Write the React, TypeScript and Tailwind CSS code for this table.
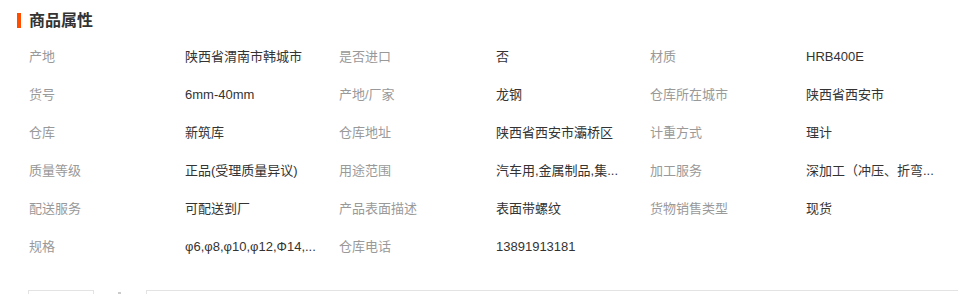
import React from "react";

const rows: [string, string, string, string, string, string][] = [
  ["产地", "陕西省渭南市韩城市", "是否进口", "否", "材质", "HRB400E"],
  ["货号", "6mm-40mm", "产地/厂家", "龙钢", "仓库所在城市", "陕西省西安市"],
  ["仓库", "新筑库", "仓库地址", "陕西省西安市灞桥区", "计重方式", "理计"],
  ["质量等级", "正品(受理质量异议)", "用途范围", "汽车用,金属制品,集...", "加工服务", "深加工（冲压、折弯..."],
  ["配送服务", "可配送到厂", "产品表面描述", "表面带螺纹", "货物销售类型", "现货"],
  ["规格", "φ6,φ8,φ10,φ12,Φ14,...", "仓库电话", "13891913181", "", ""],
];

export default function App() {
  return (
    <div
      className="w-[958px] h-[294px] overflow-hidden bg-white"
      style={{ fontFamily: '"Liberation Sans", "Noto Sans CJK SC", sans-serif' }}
    >
      <div className="flex items-center h-[37px] pl-[17px] pt-[4px]">
        <div className="w-[4px] h-[15px] bg-[#ff4e00]" />
        <div className="ml-[8px] text-[16px] font-bold text-[#333] leading-none">商品属性</div>
      </div>
      <div className="pl-[29px]">
        {rows.map((r, i) => (
          <div
            key={i}
            className="grid grid-cols-[156px_154px_157px_154px_156px_131px] h-[38px] items-center text-[13px] leading-none whitespace-nowrap"
          >
            <div className="text-[#999]">{r[0]}</div>
            <div className="text-[#333]">{r[1]}</div>
            <div className="text-[#999]">{r[2]}</div>
            <div className="text-[#333]">{r[3]}</div>
            <div className="text-[#999]">{r[4]}</div>
            <div className="text-[#333]">{r[5]}</div>
          </div>
        ))}
      </div>
      <div className="mt-[25px] flex items-start">
        <div className="ml-[28px] w-[66px] h-[10px] border border-[#e3e3e3]" />
        <div className="ml-[24px] w-[3px] h-[2px] mt-[2px] bg-[#ccc]" />
        <div className="ml-[25px] flex-1 h-[10px] border-t border-l border-[#e3e3e3]" />
      </div>
    </div>
  );
}
